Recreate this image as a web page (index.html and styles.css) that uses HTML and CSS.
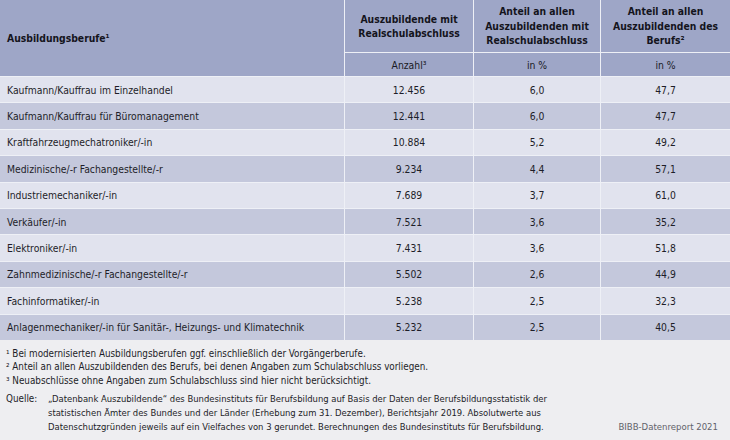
FILE: index.html
```html
<!DOCTYPE html>
<html lang="de">
<head>
<meta charset="utf-8">
<link rel="stylesheet" href="styles.css">
</head>
<body>
<div class="table">
  <div class="hcell first">Ausbildungsberufe¹</div>
  <div class="hcell">Auszubildende mit<br>Realschulabschluss</div>
  <div class="hcell">Anteil an allen<br>Auszubildenden mit<br>Realschulabschluss</div>
  <div class="hcell">Anteil an allen<br>Auszubildenden des<br>Berufs²</div>
  <div class="scell">Anzahl³</div>
  <div class="scell">in %</div>
  <div class="scell">in %</div>

  <div class="c name l">Kaufmann/Kauffrau im Einzelhandel</div><div class="c l">12.456</div><div class="c l">6,0</div><div class="c l">47,7</div>
  <div class="c name d">Kaufmann/Kauffrau für Büromanagement</div><div class="c d">12.441</div><div class="c d">6,0</div><div class="c d">47,7</div>
  <div class="c name l">Kraftfahrzeugmechatroniker/-in</div><div class="c l">10.884</div><div class="c l">5,2</div><div class="c l">49,2</div>
  <div class="c name d">Medizinische/-r Fachangestellte/-r</div><div class="c d">9.234</div><div class="c d">4,4</div><div class="c d">57,1</div>
  <div class="c name l">Industriemechaniker/-in</div><div class="c l">7.689</div><div class="c l">3,7</div><div class="c l">61,0</div>
  <div class="c name d">Verkäufer/-in</div><div class="c d">7.521</div><div class="c d">3,6</div><div class="c d">35,2</div>
  <div class="c name l">Elektroniker/-in</div><div class="c l">7.431</div><div class="c l">3,6</div><div class="c l">51,8</div>
  <div class="c name d">Zahnmedizinische/-r Fachangestellte/-r</div><div class="c d">5.502</div><div class="c d">2,6</div><div class="c d">44,9</div>
  <div class="c name l">Fachinformatiker/-in</div><div class="c l">5.238</div><div class="c l">2,5</div><div class="c l">32,3</div>
  <div class="c name d">Anlagenmechaniker/-in für Sanitär-, Heizungs- und Klimatechnik</div><div class="c d">5.232</div><div class="c d">2,5</div><div class="c d">40,5</div>
</div>
<div class="notes">
  <p>¹ Bei modernisierten Ausbildungsberufen ggf. einschließlich der Vorgängerberufe.</p>
  <p>² Anteil an allen Auszubildenden des Berufs, bei denen Angaben zum Schulabschluss vorliegen.</p>
  <p>³ Neuabschlüsse ohne Angaben zum Schulabschluss sind hier nicht berücksichtigt.</p>
  <div class="source">
    <span class="label">Quelle:</span>
    <p class="stext">„Datenbank Auszubildende“ des Bundesinstituts für Berufsbildung auf Basis der Daten der Berufsbildungsstatistik der<br>statistischen Ämter des Bundes und der Länder (Erhebung zum 31. Dezember), Berichtsjahr 2019. Absolutwerte aus<br>Datenschutzgründen jeweils auf ein Vielfaches von 3 gerundet. Berechnungen des Bundesinstituts für Berufsbildung.</p>
    <span class="brand">BIBB-Datenreport 2021</span>
  </div>
</div>
</body>
</html>
```

FILE: styles.css
```css
html, body {
  margin: 0;
  padding: 0;
}
body {
  width: 730px;
  height: 440px;
  background: #eeeef1;
  font-family: "DejaVu Sans Condensed", "DejaVu Sans", sans-serif;
  font-stretch: semi-condensed;
  color: #1d1d28;
  font-size: 10.3px;
  overflow: hidden;
}
.table {
  display: grid;
  grid-template-columns: 344px 128px 126px 129px;
  grid-template-rows: 52px 23px repeat(10, 25.4px);
  column-gap: 1px;
  row-gap: 1px;
  background: #eef0f6;
  width: 730px;
}
.hcell {
  background: #9ea6c7;
  font-weight: bold;
  text-align: center;
  line-height: 14.4px;
  display: flex;
  align-items: center;
  justify-content: center;
  color: #14141c;
  white-space: nowrap;
}
.hcell.first {
  grid-row: span 2;
  justify-content: flex-start;
  padding-left: 7px;
}
.scell {
  background: #9ea6c7;
  display: flex;
  align-items: center;
  justify-content: center;
  color: #1a1a24;
}
.c {
  display: flex;
  align-items: center;
  justify-content: center;
  white-space: nowrap;
}
.c.name {
  justify-content: flex-start;
  padding-left: 7px;
}
.l {
  background: #e1e3ee;
}
.d {
  background: #c4c8dc;
}
.notes {
  padding: 7px 6px 0 6px;
  font-size: 9.8px;
  line-height: 13.4px;
  color: #1d1d28;
}
.notes p {
  margin: 0;
  white-space: nowrap;
}
.source {
  display: flex;
  align-items: flex-end;
  margin-top: 5px;
  line-height: 14px;
}
.label {
  width: 42px;
  flex: none;
  align-self: flex-start;
}
.source .stext {
  flex: 1;
  font-size: 9.4px;
}
.brand {
  color: #62626b;
  font-size: 9.5px;
  padding-right: 6px;
}
```
